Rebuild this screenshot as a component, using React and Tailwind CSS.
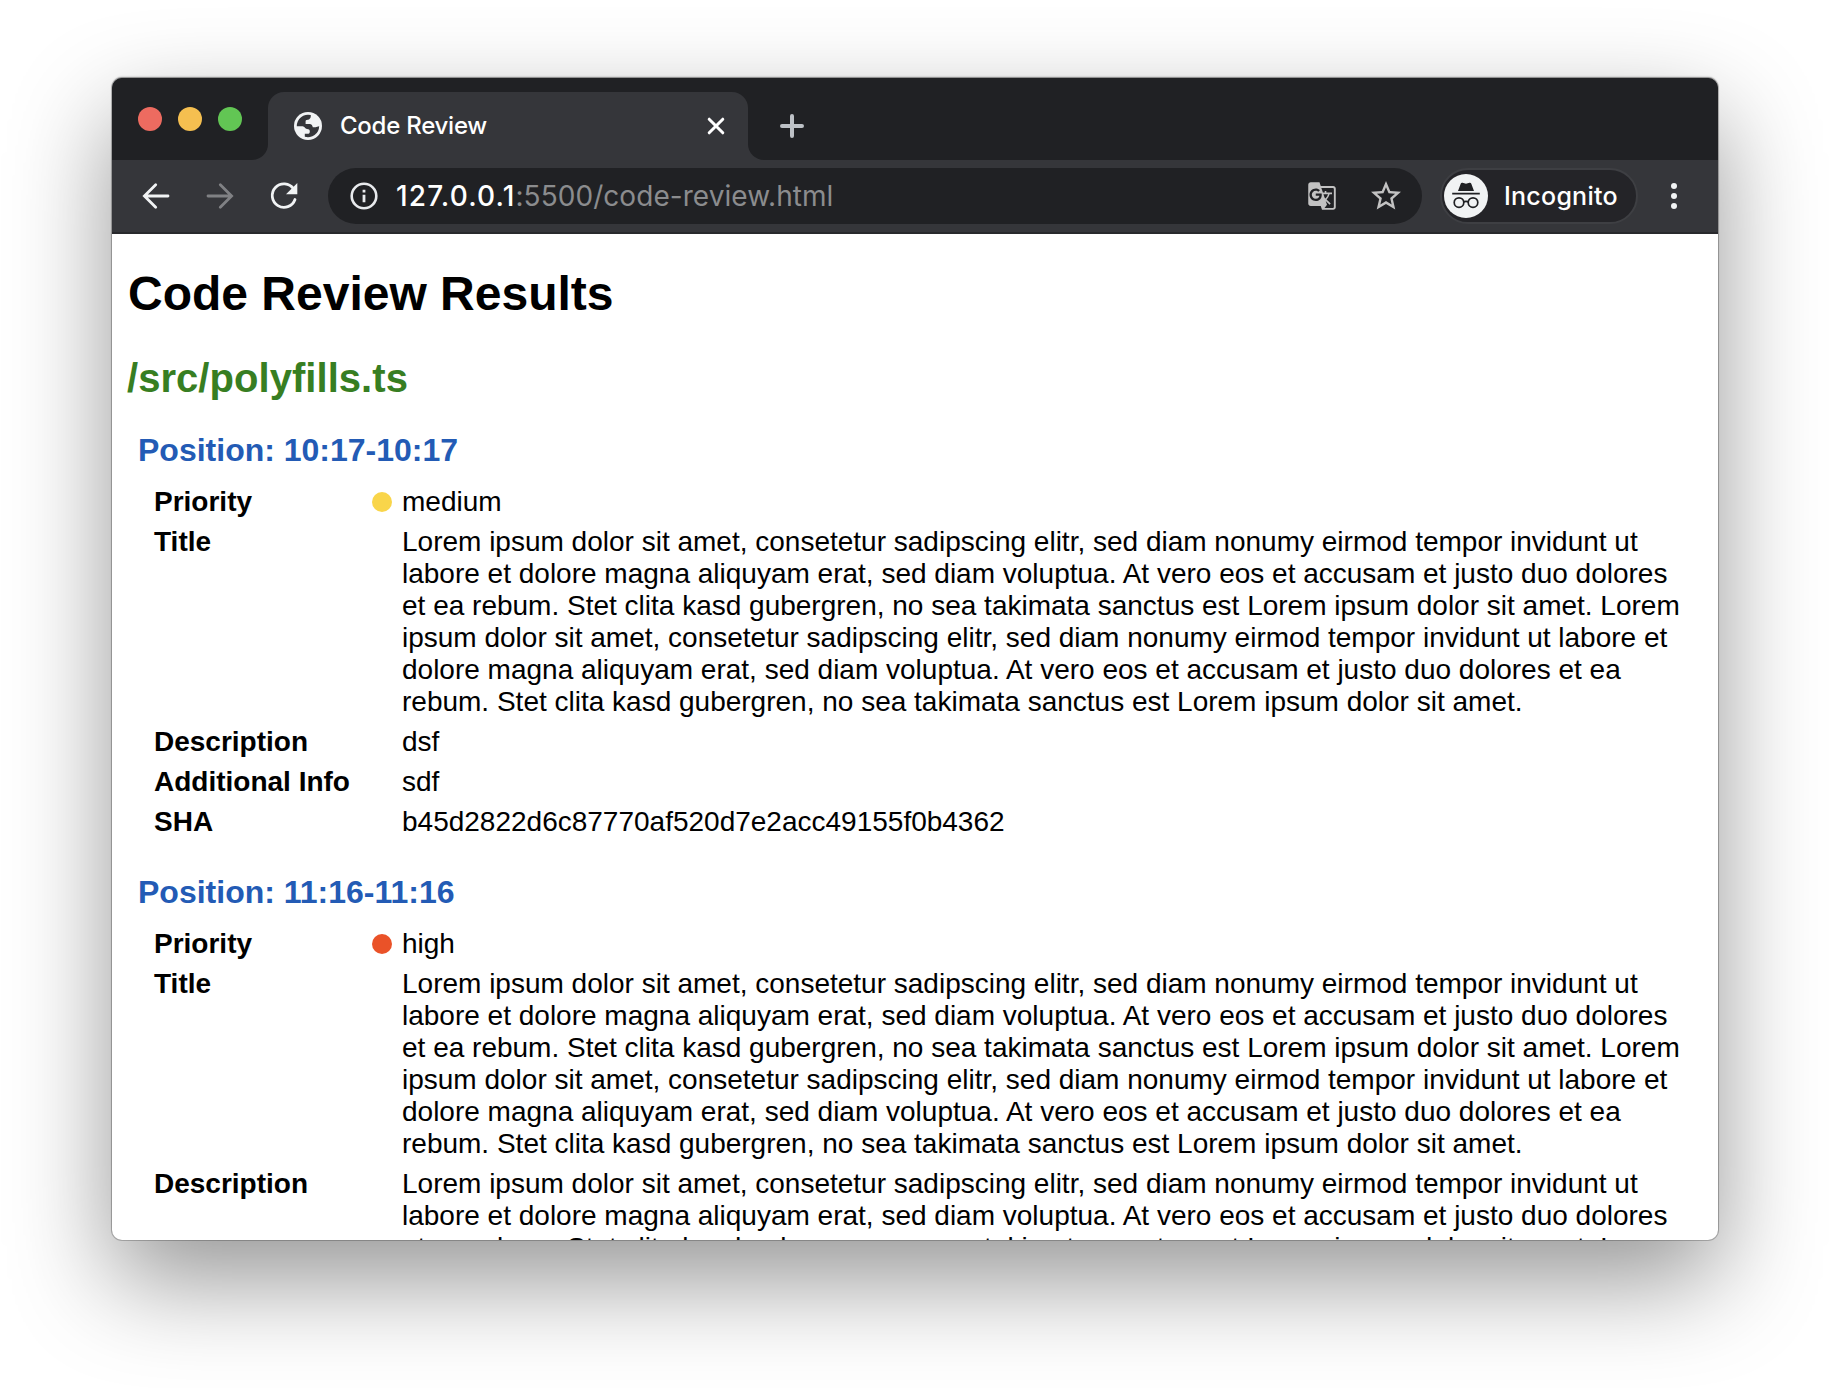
import { MdGTranslate, MdStarBorder } from "react-icons/md";

const LOREM_LINES = [
  "Lorem ipsum dolor sit amet, consetetur sadipscing elitr, sed diam nonumy eirmod tempor invidunt ut",
  "labore et dolore magna aliquyam erat, sed diam voluptua. At vero eos et accusam et justo duo dolores",
  "et ea rebum. Stet clita kasd gubergren, no sea takimata sanctus est Lorem ipsum dolor sit amet. Lorem",
  "ipsum dolor sit amet, consetetur sadipscing elitr, sed diam nonumy eirmod tempor invidunt ut labore et",
  "dolore magna aliquyam erat, sed diam voluptua. At vero eos et accusam et justo duo dolores et ea",
  "rebum. Stet clita kasd gubergren, no sea takimata sanctus est Lorem ipsum dolor sit amet.",
];

const FINDINGS = [
  {
    position: "10:17-10:17",
    priority: "medium",
    dot: "bg-[#f9d54a]",
    rows: [
      ["Title", LOREM_LINES],
      ["Description", ["dsf"]],
      ["Additional Info", ["sdf"]],
      ["SHA", ["b45d2822d6c87770af520d7e2acc49155f0b4362"]],
    ],
  },
  {
    position: "11:16-11:16",
    priority: "high",
    dot: "bg-[#ea5228]",
    rows: [
      ["Title", LOREM_LINES],
      ["Description", LOREM_LINES.slice(0, 3)],
    ],
  },
];

function GlobeIcon() {
  return (
    <svg className="size-7" viewBox="0 0 28 28">
      <circle cx="14" cy="14" r="14" fill="#f1f3f4" />
      <path
        d="M2.800 14.200A11.200 11.200 0 0 1 16.800 3.100C16.800 5.200 16.600 6.600 15 7.400C13.400 8 11.600 7.400 11.600 9.200V12H15.500C17.800 12 18.400 13.400 18.800 15.200H21.600C23 15.200 23.400 14.200 25.200 14.200A11.200 11.200 0 0 1 10.800 24.700V21.800H13.600C15.200 21.800 15.800 20.800 15.800 19.400C15.800 17.600 14.800 17.200 13 17C11 16.800 10.600 14.200 8.600 14.200Z"
        fill="#35363a"
      />
    </svg>
  );
}

function ArrowIcon({ className }) {
  return (
    <svg className={className} viewBox="0 0 32 32" fill="none" stroke="currentColor" strokeWidth="2.8" strokeLinecap="round" strokeLinejoin="miter">
      <path d="M28 16H5M15.700 4.700 4.400 16l11.300 11.300" />
    </svg>
  );
}

function ReloadIcon() {
  return (
    <svg className="size-8 text-[#f1f3f4]" viewBox="0 0 32 32" fill="none">
      <path d="M25.600 9A11.700 11.700 0 1 0 27 19.500" stroke="currentColor" strokeWidth="2.800" strokeLinecap="round" />
      <path d="M29.300 3v11.300H18Z" fill="currentColor" />
    </svg>
  );
}

function InfoIcon() {
  return (
    <svg className="size-7" viewBox="0 0 28 28" fill="none">
      <circle cx="14" cy="14" r="12.300" stroke="#e8eaed" strokeWidth="2.600" />
      <path d="M12.600 12.700h2.800v7.600h-2.800zM12.600 7.700h2.800v2.800h-2.800z" fill="#e8eaed" />
    </svg>
  );
}

function IncognitoIcon() {
  return (
    <svg className="size-11" viewBox="0 0 44 44" fill="none">
      <circle cx="22" cy="22" r="22" fill="#f1f3f4" />
      <path d="m14 17 2.700-7.200c.3-.9 1-1.300 1.900-1l3.400.9 3.400-.9c.9-.3 1.600.1 1.900 1L30 17Z" fill="#202124" />
      <path d="M8.200 19.700h27.600" stroke="#202124" strokeWidth="1.800" />
      <circle cx="15" cy="28.600" r="4.800" stroke="#202124" strokeWidth="1.700" />
      <circle cx="29" cy="28.600" r="4.800" stroke="#202124" strokeWidth="1.700" />
      <path d="M19.500 28.100c1.500-.9 3.500-.9 5 0" stroke="#202124" strokeWidth="1.700" />
    </svg>
  );
}

function TabStrip() {
  return (
    <div className="flex h-[82px] bg-[#35363a]">
      <div className="flex w-[156px] gap-4 rounded-br-2xl bg-[#202124] pl-[26px] pt-[29px]">
        <span className="size-6 rounded-full bg-[#ed6b60]" />
        <span className="size-6 rounded-full bg-[#f5bf50]" />
        <span className="size-6 rounded-full bg-[#62c654]" />
      </div>
      <div className="h-12 w-[480px] bg-[#202124] pt-[14px]">
        <div className="flex h-[68px] items-center rounded-t-2xl bg-[#35363a] pl-[26px] pr-[21px]">
          <GlobeIcon />
          <span className="ml-[18px] flex-1 text-2xl font-[450] tracking-[-0.25px] text-white">Code Review</span>
          <svg className="size-[22px]" viewBox="0 0 22 22" stroke="#fff" strokeWidth="3" strokeLinecap="round">
            <path d="m4.200 4.200 13.600 13.600M17.800 4.200 4.200 17.800" />
          </svg>
        </div>
      </div>
      <div className="flex flex-1 items-start rounded-bl-2xl bg-[#202124] pl-8 pt-9">
        <svg className="size-6" viewBox="0 0 24 24" stroke="#bdc1c6" strokeWidth="4" strokeLinecap="round">
          <path d="M12 2v20M2 12h20" />
        </svg>
      </div>
    </div>
  );
}

function Toolbar() {
  return (
    <div className="flex h-[74px] items-start border-b-2 border-[#28292c] bg-[#35363a] pt-2">
      <div className="flex h-14 w-[216px] items-center gap-8 pl-7">
        <ArrowIcon className="size-8 text-[#f1f3f4]" />
        <ArrowIcon className="size-8 rotate-180 text-[#808184]" />
        <ReloadIcon />
      </div>
      <div className="flex h-14 w-[1094px] items-center rounded-full bg-[#202124] pl-[22px] pr-[18px] text-[28px]">
        <InfoIcon />
        <div className="ml-[18px] flex-1 whitespace-nowrap">
          <span className="font-[450] tracking-[1.15px] text-white">127.0.0.1</span>
          <span className="tracking-[0.05px] text-[#8b8c8e]">:5500/code-review.html</span>
        </div>
        <MdGTranslate className="size-[30px] text-[#c2c2c2]" />
        <MdStarBorder className="ml-[31px] size-9 text-[#c2c2c2]" />
      </div>
      <div className="ml-[18px] flex h-14 w-[198px] items-center rounded-full border-2 border-[#3e3f43] bg-[#242428] pl-[2px]">
        <IncognitoIcon />
        <span className="ml-4 pt-0.5 text-[25px] font-[450] tracking-[0.25px] text-white">Incognito</span>
      </div>
      <div className="ml-[33px] flex h-14 flex-col justify-center gap-1">
        <span className="size-1.5 rounded-full bg-[#f1f3f4]" />
        <span className="size-1.5 rounded-full bg-[#f1f3f4]" />
        <span className="size-1.5 rounded-full bg-[#f1f3f4]" />
      </div>
    </div>
  );
}

function Row({ label, lines, dot }) {
  return (
    <div className="flex py-1 text-[28px] leading-8">
      <div className="w-[218px] font-bold">{label}</div>
      <div className="flex h-8 w-[30px] items-center">
        {dot && <span className={`size-5 rounded-full ${dot}`} />}
      </div>
      <div className="whitespace-nowrap">
        {lines.map((line) => (
          <p key={line}>{line}</p>
        ))}
      </div>
    </div>
  );
}

function Finding({ finding }) {
  return (
    <section className="pt-8">
      <h3 className="ml-[10px] text-[32px] font-bold leading-9 text-[#235bb5]">Position: {finding.position}</h3>
      <div className="ml-[26px] mt-[14px]">
        <Row label="Priority" lines={[finding.priority]} dot={finding.dot} />
        {finding.rows.map(([label, lines]) => (
          <Row key={label} label={label} lines={lines} />
        ))}
      </div>
    </section>
  );
}

export default function App() {
  return (
    <div className="h-[1388px] w-[1830px] overflow-hidden bg-white pl-28 pt-[78px]">
      <div className="flex h-[1162px] w-[1606px] flex-col overflow-hidden rounded-[10px] bg-white font-['Inter',sans-serif] shadow-[0_0_0_1px_rgba(0,0,0,0.2),0_-1px_2px_rgba(0,0,0,0.3),0_40px_100px_rgba(0,0,0,0.42)]">
        <TabStrip />
        <Toolbar />
        <main className="min-h-0 flex-1 overflow-hidden pl-4 pt-[33px] font-['Liberation_Sans',Arial,sans-serif] text-black">
          <h1 className="text-[48px] font-bold leading-[54px]">Code Review Results</h1>
          <h2 className="-ml-px mt-[35px] text-[40px] font-bold leading-[44px] tracking-[0.05px] text-[#377e22]">/src/polyfills.ts</h2>
          {FINDINGS.map((f) => (
            <Finding key={f.position} finding={f} />
          ))}
        </main>
      </div>
    </div>
  );
}
